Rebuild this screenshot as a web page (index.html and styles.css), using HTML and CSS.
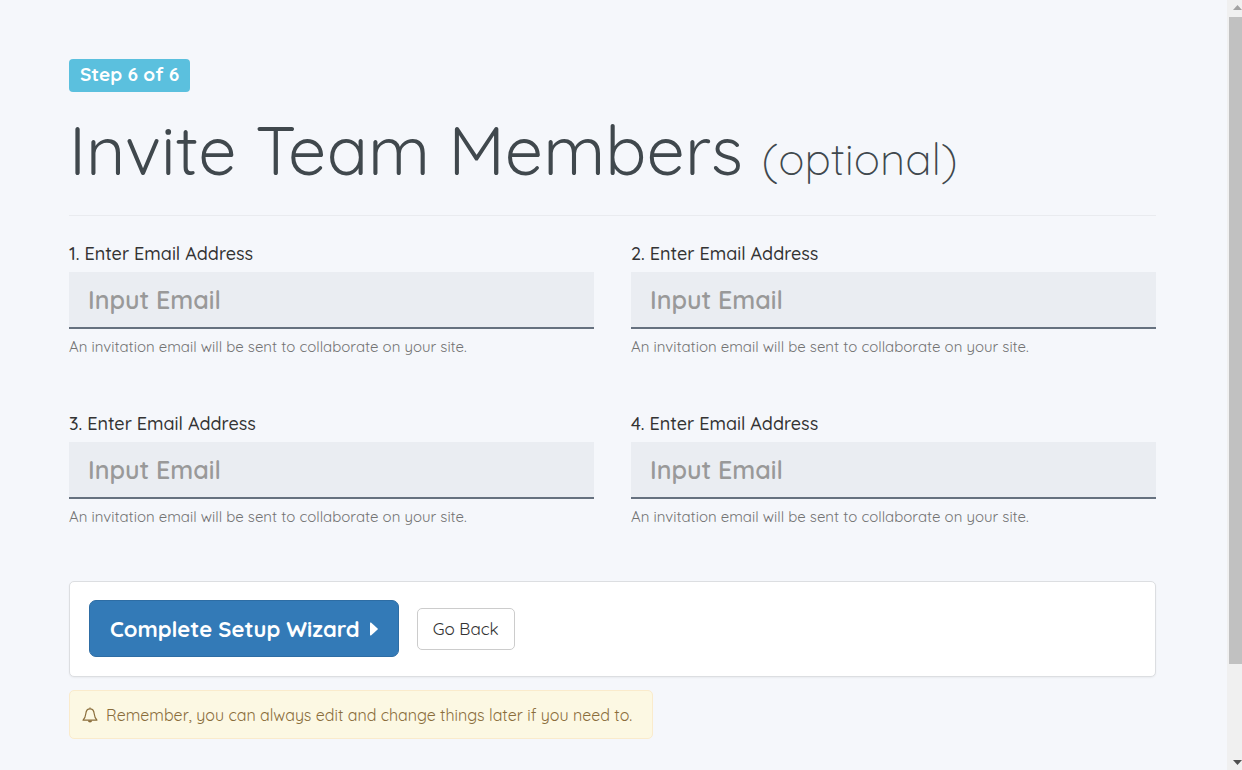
FILE: index.html
```html
<!DOCTYPE html>
<html lang="en">
<head>
    <meta charset="UTF-8">
    <meta name="viewport" content="width=device-width, initial-scale=1.0">
    <title>Invite Team Members</title>
    <link rel="stylesheet" href="styles.css">
</head>
<body>
    <main class="page">
        <span class="step-label">Step 6 of 6</span>
        <h1 class="page-title">Invite Team Members <small>(optional)</small></h1>

        <form class="wizard">
            <div class="invite-grid">
                <div class="form-group">
                    <label for="email-1">1. Enter Email Address</label>
                    <input type="email" id="email-1" placeholder="Input Email">
                    <p class="help-block">An invitation email will be sent to collaborate on your site.</p>
                </div>
                <div class="form-group">
                    <label for="email-2">2. Enter Email Address</label>
                    <input type="email" id="email-2" placeholder="Input Email">
                    <p class="help-block">An invitation email will be sent to collaborate on your site.</p>
                </div>
                <div class="form-group">
                    <label for="email-3">3. Enter Email Address</label>
                    <input type="email" id="email-3" placeholder="Input Email">
                    <p class="help-block">An invitation email will be sent to collaborate on your site.</p>
                </div>
                <div class="form-group">
                    <label for="email-4">4. Enter Email Address</label>
                    <input type="email" id="email-4" placeholder="Input Email">
                    <p class="help-block">An invitation email will be sent to collaborate on your site.</p>
                </div>
            </div>

            <div class="panel">
                <button type="submit" class="btn btn-primary">
                    Complete Setup Wizard
                    <svg class="caret" viewBox="0 0 8 14" aria-hidden="true"><path d="M0 1.2Q0 0 1 .6L7.6 6.4Q8.2 7 7.6 7.6L1 13.4Q0 14 0 12.8Z"/></svg>
                </button>
                <button type="button" class="btn btn-default">Go Back</button>
            </div>
        </form>

        <div class="alert">
            <svg class="bell" viewBox="0 0 16 16" aria-hidden="true">
                <path d="M8 .4v1.400M1 13.100h14c-1.700-1.500-2.500-3.300-2.800-6.300C11.900 3.500 10.500 1.900 8 1.900S4.100 3.500 3.800 6.800C3.500 9.800 2.700 11.600 1 13.100z"/>
                <path d="M5.900 13.500a2.100 2.100 0 0 0 4.200 0z" class="clapper"/>
            </svg>
            <span>Remember, you can always edit and change things later if you need to.</span>
        </div>
    </main>

    <div class="scrollbar" aria-hidden="true">
        <svg class="arrow arrow-up" viewBox="0 0 9 5"><path d="M0 5L4.500 0L9 5z"/></svg>
        <div class="thumb"></div>
        <svg class="arrow arrow-down" viewBox="0 0 9 5"><path d="M0 0L4.500 5L9 0z"/></svg>
    </div>
</body>
</html>
```

FILE: styles.css
```css
* {
    box-sizing: border-box;
}

body {
    display: flex;
    align-items: flex-start;
    margin: 0;
    background: #f5f7fb;
    color: #333;
    font-family: Quicksand, Lato, sans-serif;
    font-size: 17px;
    font-weight: 400;
    line-height: 26px;
}

.page {
    flex: 1;
    padding: 59px 71px 31px 69px;
}

.step-label {
    display: inline-block;
    padding: 2px 11px 5px;
    border-radius: 4px;
    background: #5bc0de;
    color: #fff;
    font-size: 19px;
    font-weight: 700;
}

.page-title {
    margin: 18px 0 25px;
    padding-bottom: 16px;
    border-bottom: 1px solid #e9ebef;
    color: #40484d;
    font-size: 68px;
    font-weight: 400;
    line-height: 80px;
}

.page-title small {
    font-size: 44px;
    font-weight: 300;
}

.invite-grid {
    display: grid;
    grid-template-columns: 1fr 1fr;
    column-gap: 37px;
}

.form-group {
    height: 170px;
}

.form-group label {
    display: block;
    margin-bottom: 5px;
    font-size: 18px;
    font-weight: 500;
}

.form-group input {
    display: block;
    width: 100%;
    height: 57px;
    padding: 0 19px;
    border: 0;
    border-bottom: 2px solid #66717f;
    border-radius: 0;
    background: #eaedf2;
    color: #40484d;
    font-family: inherit;
    font-size: 25px;
    font-weight: 600;
}

.form-group input::placeholder {
    color: #999;
}

.help-block {
    margin: 5px 0 0;
    color: #737373;
    font-size: 15px;
}

.panel {
    display: flex;
    align-items: center;
    gap: 18px;
    padding: 18px 19px 19px;
    border: 1px solid #dcdee1;
    border-radius: 5px;
    background: #fff;
    box-shadow: 0 1px 2px rgba(0, 0, 0, 0.05);
}

.btn {
    font-family: inherit;
    cursor: pointer;
}

.btn-primary {
    display: flex;
    align-items: center;
    gap: 10px;
    height: 57px;
    padding: 0 20px;
    border: 1px solid #2e6da4;
    border-radius: 7px;
    background: #337ab7;
    color: #fff;
    font-size: 22px;
    font-weight: 700;
}

.caret {
    width: 8px;
    height: 14px;
    fill: currentColor;
}

.btn-default {
    height: 42px;
    padding: 0 15px;
    border: 1px solid #ccc;
    border-radius: 5px;
    background: #fff;
    color: #333;
    font-size: 17px;
    font-weight: 400;
}

.alert {
    display: inline-flex;
    align-items: center;
    gap: 8px;
    margin-top: 13px;
    padding: 11px 20px 10px 12px;
    border: 1px solid #faebcc;
    border-radius: 5px;
    background: #fcf8e3;
    color: #8a6d3b;
    font-size: 16px;
}

.bell {
    width: 16px;
    height: 16px;
    fill: none;
    stroke: currentColor;
    stroke-width: 1.2;
    stroke-linejoin: round;
}

.clapper {
    fill: currentColor;
    stroke: none;
}

.scrollbar {
    position: sticky;
    top: 0;
    display: flex;
    flex-direction: column;
    align-items: flex-end;
    width: 15px;
    height: 100vh;
    padding: 5px 0;
    background: #f0f0f0;
}

.arrow {
    width: 9px;
    height: 5px;
}

.arrow-up {
    fill: #a3a3a3;
}

.arrow-down {
    margin-top: auto;
    fill: #505050;
}

.thumb {
    width: 13px;
    height: 84vh;
    margin-top: 7px;
    background: #c1c1c1;
}
```
